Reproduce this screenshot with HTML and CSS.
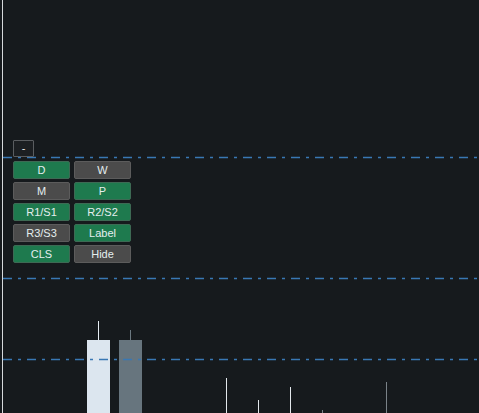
FILE: index.html
```html
<!DOCTYPE html>
<html lang="en">
<head>
  <meta charset="UTF-8">
  <title>Chart</title>
  <link rel="stylesheet" href="styles.css">
</head>
<body>
  <div class="chart">
    <!-- price canvas: candles and level lines -->
    <svg class="plot" width="479" height="413" viewBox="0 0 479 413">
      <line x1="2.5" y1="0" x2="2.5" y2="413" stroke="#d6d9dc" stroke-width="1"/>

      <line x1="98.5" y1="321" x2="98.5" y2="340" stroke="#e6edf3"/>
      <rect x="87" y="340" width="23" height="73" fill="#dce6ef"/>
      <line x1="130.5" y1="330" x2="130.5" y2="340" stroke="#6b7880"/>
      <rect x="119" y="340" width="23" height="73" fill="#67757e"/>

      <line x1="226.5" y1="378" x2="226.5" y2="413" stroke="#e3e8ec"/>
      <line x1="258.5" y1="400" x2="258.5" y2="413" stroke="#e3e8ec"/>
      <line x1="290.5" y1="387" x2="290.5" y2="413" stroke="#e3e8ec"/>
      <line x1="322.5" y1="410" x2="322.5" y2="413" stroke="#7a8288"/>
      <line x1="386.5" y1="382" x2="386.5" y2="413" stroke="#7a8288"/>

      <g stroke="#3978b4" stroke-width="1.3" stroke-dasharray="9 6 3 6">
        <line x1="3" y1="157.5" x2="479" y2="157.5"/>
        <line x1="3" y1="278.5" x2="479" y2="278.5"/>
        <line x1="3" y1="359.5" x2="479" y2="359.5"/>
      </g>
    </svg>

    <div class="panel">
      <button class="toggle">-</button>
      <div class="grid">
        <button class="btn on">D</button>
        <button class="btn">W</button>
        <button class="btn">M</button>
        <button class="btn on">P</button>
        <button class="btn on">R1/S1</button>
        <button class="btn on">R2/S2</button>
        <button class="btn">R3/S3</button>
        <button class="btn on">Label</button>
        <button class="btn on">CLS</button>
        <button class="btn">Hide</button>
      </div>
    </div>
  </div>
</body>
</html>
```

FILE: styles.css
```css
html, body {
  margin: 0;
  padding: 0;
  background: #161a1d;
  overflow: hidden;
}
.chart {
  position: relative;
  width: 479px;
  height: 413px;
}
.plot {
  position: absolute;
  left: 0;
  top: 0;
  display: block;
}
/* floating toggle panel over the chart */
.panel {
  position: absolute;
  left: 13px;
  top: 140px;
  display: flex;
  flex-direction: column;
  align-items: flex-start;
  gap: 4px;
}
.toggle {
  width: 21px;
  height: 17px;
  margin: 0;
  padding: 0;
  background: #1c1f22;
  border: 1px solid #5a5d60;
  border-radius: 1px;
  color: #e8e8e8;
  font: 11px/15px "Liberation Sans", Arial, sans-serif;
}
.grid {
  display: grid;
  grid-template-columns: 57px 57px;
  grid-auto-rows: 18px;
  column-gap: 4px;
  row-gap: 3px;
}
.btn {
  margin: 0;
  padding: 0;
  background: #4b4b4b;
  border: 1px solid #5c5c5c;
  border-radius: 2px;
  color: #e4eeee;
  font: 11px/16px "Liberation Sans", Arial, sans-serif;
  text-align: center;
}
.btn.on {
  background: #1e7a4e;
  border-color: #3d6a54;
}
```
